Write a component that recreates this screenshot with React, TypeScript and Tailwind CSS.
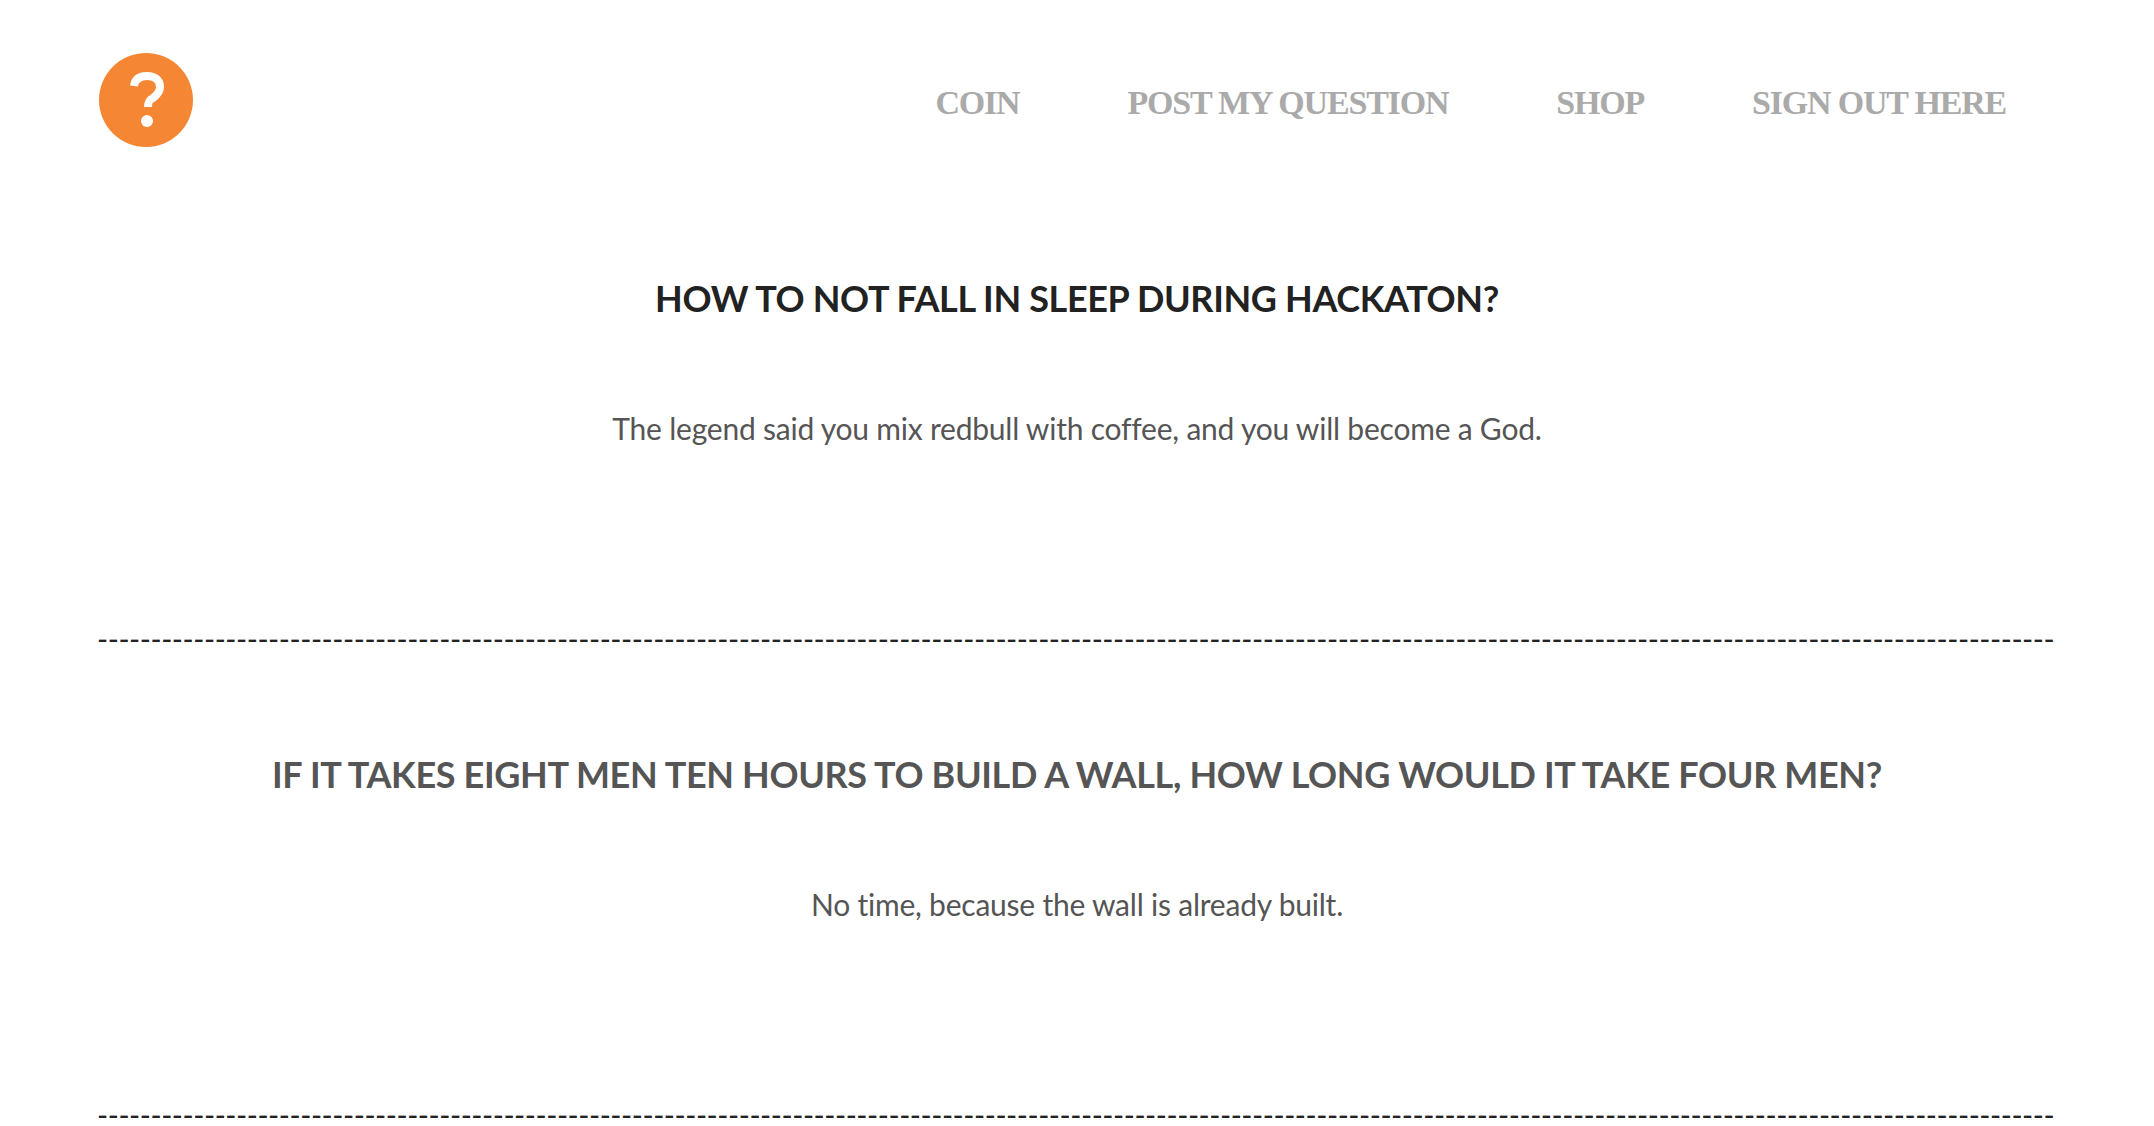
const dashes = "-".repeat(183);

function Question({ title, answer, dark }: { title: string; answer: string; dark?: boolean }) {
  return (
    <section className="flex flex-col items-center">
      <h2 className={`text-[36px] leading-[44px] font-bold tracking-[-0.35px] ${dark ? "text-[#222222]" : "text-[#555555]"}`}>
        {title}
      </h2>
      <p className="mt-[90px] text-[30px] leading-[36px] tracking-[-0.22px] text-[#555555]">{answer}</p>
      <div className="mt-[174px] w-full h-[36px] leading-[36px] text-[30px] tracking-[-0.45px] text-[#222222] whitespace-nowrap">
        {dashes}
      </div>
    </section>
  );
}

export default function App() {
  return (
    <div className="h-[1126px] overflow-hidden bg-white font-['Lato',sans-serif]">
      <header className="flex items-center justify-between pl-[99px] pr-[148px] pt-[53px]">
        <svg width="94" height="94" viewBox="0 0 94 94">
          <circle cx="47" cy="47" r="47" fill="#f58634" />
          <path
            d="M35 33c1-7 6-10 13-10 8 0 13 4 13 11 0 5-3 8-7 11-4 2-5 4-5 9"
            fill="none"
            stroke="#fff"
            strokeWidth="8"
          />
          <circle cx="48" cy="68" r="6" fill="#fff" />
        </svg>
        <nav className="flex gap-[108px] pt-[5px] font-['Liberation_Serif',serif] text-[34px] font-bold text-[#aaaaaa] tracking-[-1.2px]">
          <a>COIN</a>
          <a>POST MY QUESTION</a>
          <a>SHOP</a>
          <a>SIGN OUT HERE</a>
        </nav>
      </header>
      <main className="mt-[129px] px-[97px] flex flex-col gap-[96px]">
        <Question dark title="HOW TO NOT FALL IN SLEEP DURING HACKATON?" answer="The legend said you mix redbull with coffee, and you will become a God." />
        <Question title="IF IT TAKES EIGHT MEN TEN HOURS TO BUILD A WALL, HOW LONG WOULD IT TAKE FOUR MEN?" answer="No time, because the wall is already built." />
      </main>
    </div>
  );
}
